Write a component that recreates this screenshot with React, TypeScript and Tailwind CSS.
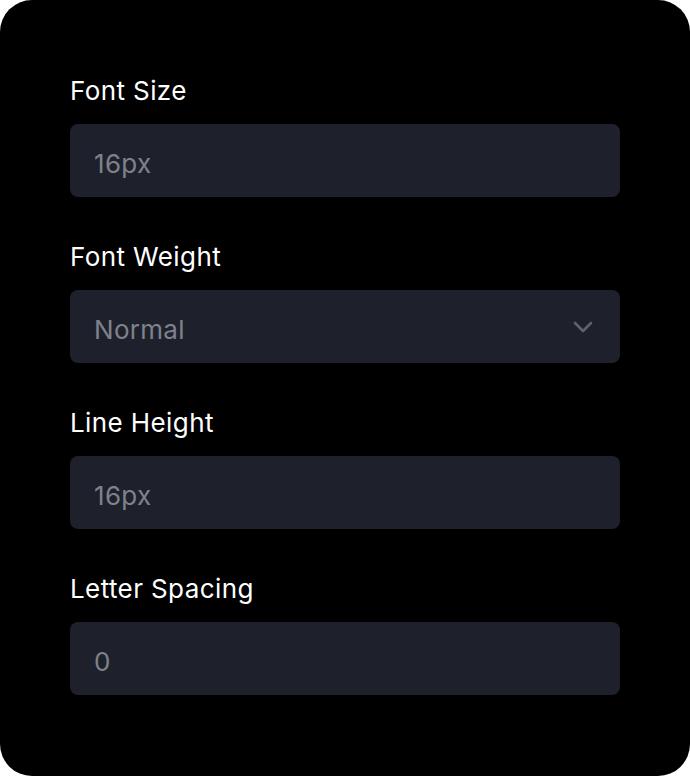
const Field = ({ label, children }: { label: string; children: React.ReactNode }) => (
  <div className="flex flex-col gap-[17px]">
    <label className="text-[26px] leading-[32px] tracking-[0.4px] text-white">{label}</label>
    {children}
  </div>
);

const inputClass =
  'h-[73px] w-full rounded-[8px] bg-[#1e212b] px-6 pt-[5px] text-[26px] tracking-[0.3px] text-[#7f828c] outline-none placeholder:text-[#7f828c]';

export default function App() {
  return (
    <div className="min-h-screen bg-white" style={{ fontFamily: 'Inter, "Noto Sans", sans-serif' }}>
      <div className="flex h-[776px] w-[690px] flex-col gap-[44px] rounded-[32px] bg-black px-[70px] pt-[75px]">
        <Field label="Font Size">
          <input className={inputClass} placeholder="16px" />
        </Field>
        <Field label="Font Weight">
          <div className="relative">
            <select className={`${inputClass} appearance-none`} defaultValue="normal">
              <option value="normal">Normal</option>
              <option value="medium">Medium</option>
              <option value="bold">Bold</option>
            </select>
            <svg
              className="pointer-events-none absolute right-[27px] top-1/2 -translate-y-1/2"
              width="20"
              height="12"
              viewBox="0 0 20 12"
              fill="none"
              stroke="#5e616c"
              strokeWidth="2.6"
              strokeLinecap="round"
              strokeLinejoin="round"
            >
              <path d="M2 2l8 8 8-8" />
            </svg>
          </div>
        </Field>
        <Field label="Line Height">
          <input className={inputClass} placeholder="16px" />
        </Field>
        <Field label="Letter Spacing">
          <input className={inputClass} placeholder="0" />
        </Field>
      </div>
    </div>
  );
}
